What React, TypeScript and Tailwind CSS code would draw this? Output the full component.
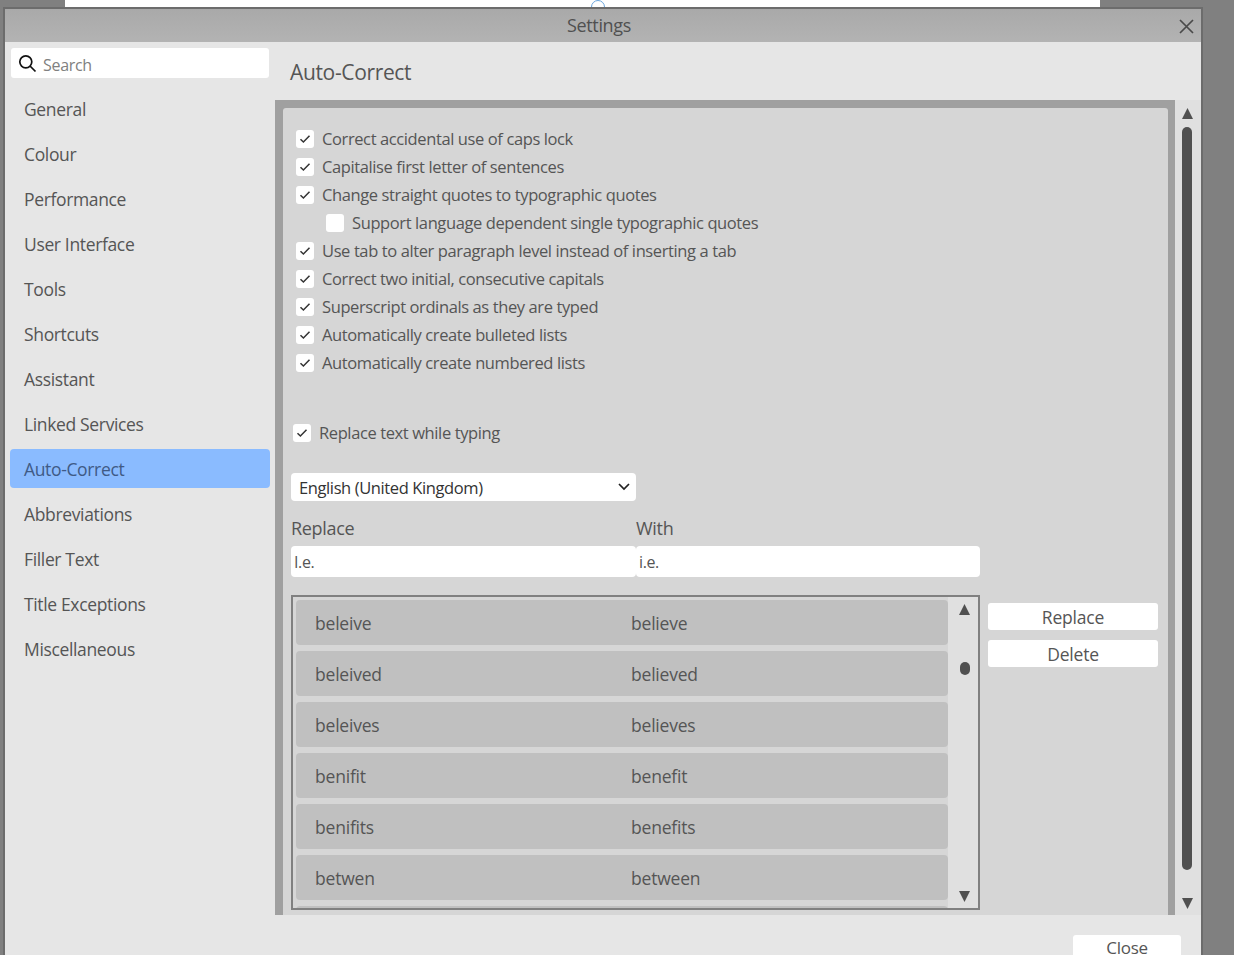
import React from "react";

const nav = ["General","Colour","Performance","User Interface","Tools","Shortcuts","Assistant","Linked Services","Auto-Correct","Abbreviations","Filler Text","Title Exceptions","Miscellaneous"];
const checks: [string, boolean, boolean][] = [
  ["Correct accidental use of caps lock", true, false],
  ["Capitalise first letter of sentences", true, false],
  ["Change straight quotes to typographic quotes", true, false],
  ["Support language dependent single typographic quotes", false, true],
  ["Use tab to alter paragraph level instead of inserting a tab", true, false],
  ["Correct two initial, consecutive capitals", true, false],
  ["Superscript ordinals as they are typed", true, false],
  ["Automatically create bulleted lists", true, false],
  ["Automatically create numbered lists", true, false],
];
const rows = [["beleive","believe"],["beleived","believed"],["beleives","believes"],["benifit","benefit"],["benifits","benefits"],["betwen","between"]];

function Box({ on }: { on: boolean }) {
  return (
    <span className="flex h-[18px] w-[18px] shrink-0 items-center justify-center rounded-[3px] bg-white">
      {on && (
        <svg width="12" height="10" viewBox="0 0 12 10" fill="none" stroke="#333" strokeWidth="1.5">
          <path d="M1.5 5.2 4.4 8 10.5 1.8" />
        </svg>
      )}
    </span>
  );
}
function Up({ c = "#505050" }: { c?: string }) {
  return <svg width="11" height="11" viewBox="0 0 11 11"><path d="M5.5 0 11 11H0z" fill={c} /></svg>;
}
function Down({ c = "#505050" }: { c?: string }) {
  return <svg width="11" height="11" viewBox="0 0 11 11"><path d="M0 0h11L5.5 11z" fill={c} /></svg>;
}

export default function App() {
  return (
    <div className="flex h-[955px] w-[1234px] flex-col overflow-hidden bg-[#808080] font-['Open_Sans','Noto_Sans',sans-serif] text-[#555555]">
      <div className="relative ml-[65px] h-[7px] w-[1035px] shrink-0 bg-white">
        <span className="absolute left-[526px] top-[0px] h-[14px] w-[14px] rounded-full border border-[#6aa5dc]" />
      </div>
      <div className="relative z-10 ml-[3px] flex h-[948px] w-[1200px] shrink-0 flex-col border-2 border-b-0 border-[#6c6c6c] bg-[#e6e6e6]">
        <div className="relative flex h-[33px] shrink-0 items-center justify-center bg-gradient-to-b from-[#a9a9a9] to-[#b3b3b3] pr-[8px] text-[18px] tracking-[-0.35px] text-[#505050]">
          Settings
          <svg className="absolute right-[7px] top-[10px]" width="15" height="15" viewBox="0 0 15 15" stroke="#4a4a4a" strokeWidth="1.7" fill="none">
            <path d="M1 1 14 14M14 1 1 14" />
          </svg>
        </div>
        <div className="flex h-[873px] shrink-0">
          <aside className="flex w-[270px] shrink-0 flex-col pl-[5px] pr-[5px] pt-[6px]">
            <div className="mb-[11px] ml-[1px] mr-[1px] flex h-[30px] items-center rounded-[3px] bg-white pl-[7px] text-[16px] tracking-[-0.3px] text-[#808080]">
              <svg width="19" height="19" viewBox="0 0 19 19" fill="none" stroke="#111" strokeWidth="1.7">
                <circle cx="7.8" cy="7.8" r="6" />
                <path d="m12 12 5.5 5.5" />
              </svg>
              <span className="ml-[6px] pt-[3px]">Search</span>
            </div>
            {nav.map((n) => (
              <div key={n} className={`mb-[6px] flex h-[39px] items-center rounded-[4px] pl-[14px] pt-[2px] text-[17.5px] tracking-[-0.35px] ${n === "Auto-Correct" ? "bg-[#8abbff] text-[#3f5a85]" : ""}`}>
                {n}
              </div>
            ))}
          </aside>
          <main className="flex min-w-0 flex-1 flex-col">
            <div className="flex h-[58px] shrink-0 items-center pl-[15px] pt-[3px] text-[21px] tracking-[-0.35px]">Auto-Correct</div>
            <div className="flex h-[815px] shrink-0">
              <div className="flex w-[900px] shrink-0 bg-[#a0a0a0] pl-[8px] pr-[7px] pt-[8px]">
                <div className="flex flex-1 flex-col rounded-t-[3px] bg-[#d6d6d6] pl-[8px] text-[16.5px] tracking-[-0.39px]">
                  <div className="flex flex-col pl-[5px] pt-[17px]">
                    {checks.map(([t, on, sub]) => (
                      <div key={t} className={`flex h-[28px] items-center gap-[8px] ${sub ? "pl-[30px]" : ""}`}>
                        <Box on={on} />
                        <span>{t}</span>
                      </div>
                    ))}
                  </div>
                  <div className="mt-[42px] flex h-[28px] items-center gap-[8px] pl-[2px]">
                    <Box on />
                    <span>Replace text while typing</span>
                  </div>
                  <div className="mt-[26px] flex h-[28px] w-[345px] items-center justify-between rounded-[4px] bg-white pl-[8px] pr-[6px] pt-[2px] text-[#333]">
                    <span>English (United Kingdom)</span>
                    <svg className="mb-[2px]" width="12" height="8" viewBox="0 0 12 8" fill="none" stroke="#222" strokeWidth="1.7"><path d="m1 1 5 5 5-5" /></svg>
                  </div>
                  <div className="mt-[14px] flex h-[28px] w-[689px] text-[18px] tracking-[-0.3px]">
                    <span className="w-[345px]">Replace</span>
                    <span>With</span>
                  </div>
                  <div className="mt-[3px] flex h-[31px] w-[689px] text-[16px]">
                    <div className="flex w-[345px] items-center rounded-[4px] bg-white pl-[3px]">I.e.</div>
                    <div className="flex w-[344px] items-center rounded-[4px] bg-white pl-[3px]">i.e.</div>
                  </div>
                  <div className="mt-[18px] flex min-h-0 flex-1 items-start">
                    <div className="flex h-[315px] w-[689px] shrink-0 overflow-hidden border-2 border-[#808080] text-[17.5px] tracking-[-0.2px]">
                      <div className="flex w-[655px] shrink-0 flex-col gap-[6px] overflow-hidden pl-[3px] pt-[3px]">
                        {rows.map(([a, b]) => (
                          <div key={a} className="flex h-[45px] w-[652px] shrink-0 items-center rounded-[4px] bg-[#c0c0c0] pl-[19px] pt-[2px]">
                            <span className="w-[316px]">{a}</span>
                            <span>{b}</span>
                          </div>
                        ))}
                        <div className="h-[45px] w-[652px] shrink-0 rounded-[4px] bg-[#c0c0c0]" />
                      </div>
                      <div className="flex flex-1 flex-col items-center bg-[#e0e0e0] pb-[6px] pl-[3px] pt-[7px]">
                        <Up />
                        <span className="mt-[47px] h-[13px] w-[10px] rounded-full bg-[#505050]" />
                        <span className="flex-1" />
                        <Down />
                      </div>
                    </div>
                    <div className="ml-[8px] flex w-[170px] flex-col gap-[10px] pt-[8px] text-[17.5px] tracking-[-0.2px]">
                      <div className="flex h-[27px] items-center justify-center rounded-[3px] bg-white pt-[1px]">Replace</div>
                      <div className="flex h-[27px] items-center justify-center rounded-[3px] bg-white pt-[1px]">Delete</div>
                    </div>
                  </div>
                </div>
              </div>
              <div className="flex flex-1 flex-col items-center bg-[#e0e0e0] pb-[6px] pr-[2px] pt-[8px]">
                <Up />
                <span className="mt-[8px] w-[10px] flex-1 rounded-full bg-[#505050]" />
                <span className="mt-[28px]"><Down /></span>
              </div>
            </div>
          </main>
        </div>
        <div className="flex flex-1 justify-end pr-[20px] pt-[20px]">
          <div className="flex h-[40px] w-[108px] items-start justify-center rounded-t-[3px] bg-white pt-[2px] text-[17px] leading-[22px] tracking-[-0.3px]">Close</div>
        </div>
      </div>
    </div>
  );
}
